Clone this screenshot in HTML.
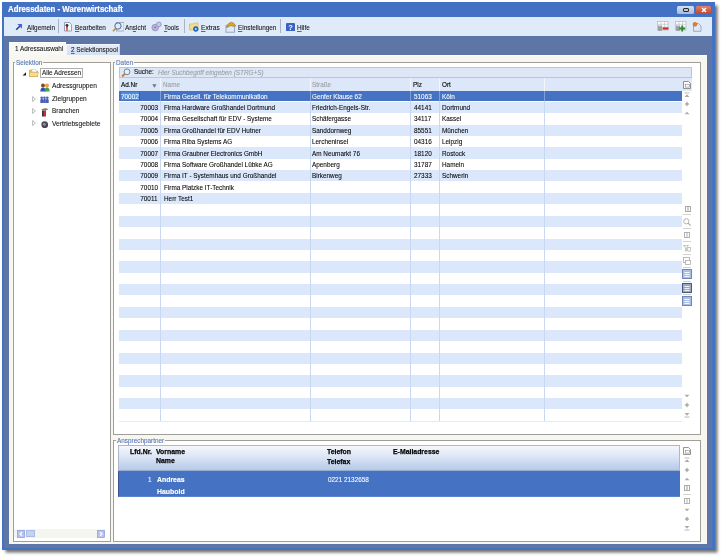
<!DOCTYPE html><html><head><meta charset="utf-8"><style>
*{margin:0;padding:0;box-sizing:border-box}
html,body{width:724px;height:559px;overflow:hidden;background:#fff;position:relative;font-family:"Liberation Sans",sans-serif;font-size:6.4px;color:#000}
div,span{position:absolute}
u{text-decoration-thickness:0.5px;text-underline-offset:0.5px;text-decoration-color:#666}
.t{white-space:nowrap;line-height:1;-webkit-text-stroke:0.08px currentColor}
svg{position:absolute}
</style></head><body><div style="left:0;top:0;width:724px;height:559px;will-change:transform;filter:blur(0.25px)">
<div style="left:2px;top:2px;width:713px;height:548px;background:#4371c3;box-shadow:2.5px 2.5px 3px rgba(60,60,60,0.75)"></div>
<div style="left:4.4px;top:16.5px;width:707.4px;height:531px;background:#5e76a6"></div>
<span class="t" style="left:8.1px;top:5.04px;font-size:8.81px;transform:scaleX(0.8894);transform-origin:0 0;font-weight:bold;color:#fff;-webkit-text-stroke:0.2px #fff">Adressdaten - Warenwirtschaft</span>
<div style="left:677px;top:5.9px;width:17px;height:8px;background:linear-gradient(#d4e0f6,#a5b9e0);border-radius:1.5px"></div>
<div style="left:682.5px;top:8.3px;width:6px;height:4px;border:1px solid #2a2a2a;border-radius:1px;background:#b8c4dc"></div>
<div style="left:695.7px;top:5.9px;width:15.5px;height:8px;background:linear-gradient(#e4806a,#c0452e);border-radius:1.5px"></div>
<svg style="left:700.5px;top:7.2px" width="6" height="6" viewBox="0 0 6 6"><path d="M1 1 L5 5 M5 1 L1 5" stroke="#fff" stroke-width="1.5"/></svg>
<div style="left:4px;top:16.6px;width:708.2px;height:19.4px;background:#e0ebfa"></div>
<div style="left:58.1px;top:19.3px;width:1px;height:13.5px;background:#a9b3c4"></div>
<div style="left:183.9px;top:19.3px;width:1px;height:13.5px;background:#a9b3c4"></div>
<div style="left:280.0px;top:19.3px;width:1px;height:13.5px;background:#a9b3c4"></div>
<svg style="left:15px;top:23px" width="8" height="8" viewBox="0 0 8 8"><path d="M1.2 6.8 L5.8 2.2" stroke="#2c3f8a" stroke-width="1.6"/><path d="M2.3 1 L7 1 L7 5.7 Z" fill="#4e62d0"/></svg>
<span class="t" style="left:26.7px;top:23.50px;font-size:7.23px;transform:scaleX(0.8850);transform-origin:0 0;color:#111"><u>A</u>llgemein</span>
<svg style="left:63px;top:21px" width="10" height="11" viewBox="0 0 10 11"><path d="M1.5 1.5 H6.5 L8.5 3.5 V10 H1.5 Z" fill="#f4f6fb" stroke="#8a96b8" stroke-width="0.9"/><path d="M3 4.5 L5 4.5 L4.6 10 L3.4 10 Z" fill="#c04a28"/><circle cx="4" cy="4.3" r="1.4" fill="#333"/></svg>
<span class="t" style="left:75.3px;top:23.50px;font-size:7.23px;transform:scaleX(0.8850);transform-origin:0 0;color:#111"><u>B</u>earbeiten</span>
<svg style="left:111.5px;top:21px" width="12.5" height="11" viewBox="0 0 12.5 11"><rect x="4.5" y="1.5" width="7.5" height="8.5" fill="#e8eef8" stroke="#8aa0c8" stroke-width="0.8"/><circle cx="6" cy="5" r="3.2" fill="#d8ecfa" stroke="#5a6a88" stroke-width="1"/><path d="M3.8 7.2 L1 10.3" stroke="#c88a30" stroke-width="1.6"/></svg>
<span class="t" style="left:125px;top:23.50px;font-size:7.23px;transform:scaleX(0.8850);transform-origin:0 0;color:#111">An<u>s</u>icht</span>
<svg style="left:151px;top:21px" width="11" height="11" viewBox="0 0 11 11"><circle cx="4.2" cy="6.6" r="3.3" fill="#bdb8dc" stroke="#9088bc" stroke-width="0.8"/><circle cx="7.8" cy="3.4" r="2.4" fill="#ccc7e6" stroke="#9088bc" stroke-width="0.8"/><circle cx="4.2" cy="6.6" r="1" fill="#7d76a8"/></svg>
<span class="t" style="left:163.7px;top:23.50px;font-size:7.23px;transform:scaleX(0.8850);transform-origin:0 0;color:#111"><u>T</u>ools</span>
<svg style="left:188.5px;top:21px" width="10.5" height="11" viewBox="0 0 10.5 11"><path d="M0.5 3 H4 L5 2 H9 V9 H0.5 Z" fill="#f1dd8a" stroke="#d8b850" stroke-width="0.7"/><circle cx="6.8" cy="8" r="2.4" fill="#2a6fd8" stroke="#1b4a9a" stroke-width="0.6"/><circle cx="6.8" cy="8" r="0.9" fill="#bfe0ff"/></svg>
<span class="t" style="left:200.6px;top:23.50px;font-size:7.23px;transform:scaleX(0.9204);transform-origin:0 0;color:#111"><u>E</u>xtras</span>
<svg style="left:224.5px;top:20.5px" width="12" height="12" viewBox="0 0 12 12"><rect x="1" y="4.3" width="8.6" height="6.9" fill="#dfe8f6" stroke="#8da0c4" stroke-width="0.9"/><path d="M1.5 6.3 Q3 1.5 6.5 1.2 Q9 1.5 10.8 5 L7.5 5.2 L5.5 4.6 L3 6.2 Z" fill="#d9a824" stroke="#806018" stroke-width="0.5"/></svg>
<span class="t" style="left:237.6px;top:23.50px;font-size:7.23px;transform:scaleX(0.8850);transform-origin:0 0;color:#111"><u>E</u>instellungen</span>
<svg style="left:285.8px;top:22.8px" width="9" height="8.3" viewBox="0 0 9 8.3"><rect x="0" y="0" width="9" height="8.3" rx="1" fill="#3b62c0"/><text x="4.5" y="7" font-family="Liberation Sans" font-weight="bold" font-size="7.5" fill="#fff" text-anchor="middle">?</text></svg>
<span class="t" style="left:297px;top:23.50px;font-size:7.23px;transform:scaleX(0.8850);transform-origin:0 0;color:#111"><u>H</u>ilfe</span>
<svg style="left:657px;top:21px" width="12" height="11" viewBox="0 0 12 11"><rect x="0.5" y="0.5" width="10.5" height="8.5" fill="#fbfcfb" stroke="#b4b8b6" stroke-width="0.7"/><path d="M0.5 3.3 H11 M0.5 6.1 H11 M4 0.5 V9 M7.5 0.5 V9" stroke="#b8bcba" stroke-width="0.6"/><path d="M1 4.6 H5 V9.4 Q3 10.4 1 9.4 Z" fill="#9a9fa2"/><ellipse cx="3" cy="4.6" rx="2" ry="0.8" fill="#d0d4d8"/><rect x="5.5" y="6.4" width="6" height="2.2" fill="#cc2a2a"/></svg>
<svg style="left:674.5px;top:21px" width="12" height="11" viewBox="0 0 12 11"><rect x="0.5" y="0.5" width="10.5" height="8.5" fill="#fbfcfb" stroke="#b4b8b6" stroke-width="0.7"/><path d="M0.5 3.3 H11 M0.5 6.1 H11 M4 0.5 V9 M7.5 0.5 V9" stroke="#b8bcba" stroke-width="0.6"/><path d="M1 4.6 H5 V9.4 Q3 10.4 1 9.4 Z" fill="#9a9fa2"/><ellipse cx="3" cy="4.6" rx="2" ry="0.8" fill="#d0d4d8"/><path d="M7.2 4.5 V10.5 M4.2 7.5 H10.2" stroke="#2c8a30" stroke-width="1.8"/></svg>
<svg style="left:691.5px;top:20.5px" width="10" height="11" viewBox="0 0 10 11"><path d="M1.5 2.5 H6.5 L9 5 V10.3 H1.5 Z" fill="#dde7f6" stroke="#8090b8" stroke-width="0.7"/><circle cx="3" cy="3.3" r="2" fill="#ee7a2a" stroke="#b85018" stroke-width="0.4"/></svg>
<div style="left:9px;top:54.5px;width:698px;height:489.5px;background:#f7f6f0"></div>
<div style="left:121px;top:54.5px;width:586px;height:1px;background:#fdfdfb"></div>
<div style="left:9px;top:42px;width:57px;height:13px;background:#f8f8f4;border-top:1px solid #fff"></div>
<span class="t" style="left:15px;top:45.40px;font-size:7.23px;transform:scaleX(0.8850);transform-origin:0 0;color:#111">1 Adressauswahl</span>
<div style="left:66.3px;top:43.6px;width:54px;height:11.2px;background:linear-gradient(#e4ecfa,#d3dff4);border:1px solid #f2f6fd;border-bottom:none;border-right-color:#c8d4ec"></div>
<span class="t" style="left:70.6px;top:45.60px;font-size:7.23px;transform:scaleX(0.8850);transform-origin:0 0;color:#111"><u>2</u> Selektionspool</span>
<div style="left:13px;top:62.3px;width:98.4px;height:479.59999999999997px;background:#fff;border:1px solid #9f9e99"></div>
<div style="left:14.7px;top:59.3px;width:28px;height:6px;background:#f7f6f0"></div>
<span class="t" style="left:15.7px;top:58.80px;font-size:7.23px;transform:scaleX(0.8850);transform-origin:0 0;color:#4d70b8;-webkit-text-stroke:0.05px #4d70b8">Selektion</span>
<div style="left:113.3px;top:62.4px;width:587.7px;height:372.5px;background:#fff;border:1px solid #9f9e99"></div>
<div style="left:115.1px;top:59.4px;width:19px;height:6px;background:#f7f6f0"></div>
<span class="t" style="left:116.1px;top:58.90px;font-size:7.23px;transform:scaleX(0.8850);transform-origin:0 0;color:#4d70b8;-webkit-text-stroke:0.05px #4d70b8">Daten</span>
<div style="left:113.4px;top:440.4px;width:587.6px;height:101.5px;background:#fff;border:1px solid #9f9e99"></div>
<div style="left:115.6px;top:437.4px;width:49.5px;height:6px;background:#f7f6f0"></div>
<span class="t" style="left:116.6px;top:436.90px;font-size:7.23px;transform:scaleX(0.8850);transform-origin:0 0;color:#4d70b8;-webkit-text-stroke:0.05px #4d70b8">Ansprechpartner</span>
<svg style="left:21.5px;top:71.5px" width="5" height="4" viewBox="0 0 5 4"><path d="M0.5 3.5 L4 0.2 L4 3.5 Z" fill="#1e1e1e"/></svg>
<svg style="left:28.5px;top:69px" width="10" height="8" viewBox="0 0 10 8"><path d="M0.5 1 H3.5 L4.5 2 H8.5 V7.5 H0.5 Z" fill="#e8c86a" stroke="#c0984a" stroke-width="0.6"/><path d="M3 0.5 L7 0.5 L8 3 L3 3 Z" fill="#ffffff" stroke="#b0b8c0" stroke-width="0.4"/><path d="M0.5 3.3 H9.5 L8.5 7.5 H0.5 Z" fill="#f6dd8a" stroke="#c8a050" stroke-width="0.5"/></svg>
<div style="left:40.2px;top:68.4px;width:43px;height:9.2px;border:1px solid #b0b0b0;background:#fff"></div>
<span class="t" style="left:41.8px;top:69.10px;font-size:7.23px;transform:scaleX(0.8850);transform-origin:0 0;color:#111">Alle Adressen</span>
<svg style="left:39.5px;top:82.5px" width="10" height="9" viewBox="0 0 10 9"><circle cx="3" cy="2.6" r="2" fill="#8a4a20"/><path d="M0.3 8.5 Q0.5 4.5 3 4.5 Q5.5 4.5 5.7 8.5 Z" fill="#3050b8"/><circle cx="7" cy="2.6" r="2" fill="#e8a040"/><path d="M4.3 8.5 Q4.5 4.5 7 4.5 Q9.5 4.5 9.7 8.5 Z" fill="#40a050"/></svg>
<span class="t" style="left:52.2px;top:82.40px;font-size:7.23px;transform:scaleX(0.9159);transform-origin:0 0;color:#111">Adressgruppen</span>
<svg style="left:31.5px;top:95.7px" width="4" height="6" viewBox="0 0 4 6"><path d="M0.6 0.6 L3.4 3 L0.6 5.4 Z" fill="#fff" stroke="#8a8a8a" stroke-width="0.6"/></svg>
<svg style="left:31.5px;top:108.0px" width="4" height="6" viewBox="0 0 4 6"><path d="M0.6 0.6 L3.4 3 L0.6 5.4 Z" fill="#fff" stroke="#8a8a8a" stroke-width="0.6"/></svg>
<svg style="left:31.5px;top:120.3px" width="4" height="6" viewBox="0 0 4 6"><path d="M0.6 0.6 L3.4 3 L0.6 5.4 Z" fill="#fff" stroke="#8a8a8a" stroke-width="0.6"/></svg>
<svg style="left:39.8px;top:95.8px" width="9" height="7.5" viewBox="0 0 9 7.5"><g fill="#4a60b8"><circle cx="1.7" cy="1.8" r="1.3"/><rect x="0.3" y="3" width="2.8" height="4.3" rx="1"/><circle cx="4.5" cy="1.8" r="1.3"/><rect x="3.1" y="3" width="2.8" height="4.3" rx="1"/><circle cx="7.3" cy="1.8" r="1.3"/><rect x="5.9" y="3" width="2.8" height="4.3" rx="1"/></g></svg>
<span class="t" style="left:52.2px;top:94.50px;font-size:7.23px;transform:scaleX(0.9115);transform-origin:0 0;color:#111">Zielgruppen</span>
<svg style="left:40px;top:106.5px" width="9" height="10" viewBox="0 0 9 10"><path d="M1 3 Q4 0 8.5 2 L6 3.5 Z" fill="#7a7a70"/><rect x="3" y="3.5" width="3" height="6" fill="#c03030"/><rect x="2" y="3.5" width="1.5" height="6" fill="#333"/></svg>
<span class="t" style="left:52.2px;top:107.20px;font-size:7.23px;transform:scaleX(0.8850);transform-origin:0 0;color:#111">Branchen</span>
<svg style="left:40.8px;top:120.5px" width="7.5" height="7.5" viewBox="0 0 7.5 7.5"><circle cx="3.75" cy="3.75" r="3.4" fill="#4a4650"/><circle cx="3.3" cy="3.3" r="1.4" fill="#9a90a0"/></svg>
<span class="t" style="left:52.2px;top:119.50px;font-size:7.23px;transform:scaleX(0.9292);transform-origin:0 0;color:#111">Vertriebsgebiete</span>
<div style="left:14px;top:529.3px;width:90.5px;height:8.8px;background:#f5f5f0"></div>
<svg style="left:17px;top:530.1px" width="8" height="8" viewBox="0 0 8 8"><rect x="0.4" y="0.4" width="7.2" height="7.2" fill="#b4c2ec" stroke="#8c9cdc" stroke-width="0.7"/><path d="M5 2 L3 4 L5 6" stroke="#fff" stroke-width="1.2" fill="none"/></svg>
<div style="left:25.8px;top:530.4px;width:9px;height:7px;background:#c4d2f0;border:0.6px solid #a8bce6"></div>
<svg style="left:96.8px;top:530.1px" width="8" height="8" viewBox="0 0 8 8"><rect x="0.4" y="0.4" width="7.2" height="7.2" fill="#b4c2ec" stroke="#8c9cdc" stroke-width="0.7"/><path d="M3 2 L5 4 L3 6" stroke="#fff" stroke-width="1.2" fill="none"/></svg>
<div style="left:119px;top:66.8px;width:572.5px;height:11px;background:#dde7f5;border:1px solid #b6c6e0"></div>
<svg style="left:120.5px;top:67.8px" width="10" height="9" viewBox="0 0 10 9"><circle cx="6" cy="3.8" r="2.9" fill="#dff0fb" stroke="#6a7a90" stroke-width="0.9"/><path d="M3.8 6 L1 8.5" stroke="#c8782a" stroke-width="1.8"/></svg>
<span class="t" style="left:133.8px;top:68.40px;font-size:7.23px;transform:scaleX(0.8850);transform-origin:0 0;color:#111;-webkit-text-stroke:0.12px #111">Suche:</span>
<span class="t" style="left:158px;top:68.60px;font-size:7.23px;transform:scaleX(0.8850);transform-origin:0 0;font-style:italic;color:#9aa0a8;-webkit-text-stroke:0.1px #9aa0a8">Hier Suchbegriff eingeben (STRG+S)</span>
<div style="left:119.0px;top:77.8px;width:573.0px;height:12.9px;background:#dce8f9"></div>
<span class="t" style="left:120.9px;top:80.80px;font-size:7.23px;transform:scaleX(0.8850);transform-origin:0 0;color:#000;-webkit-text-stroke:0.15px #000">Ad.Nr</span>
<svg style="left:152px;top:83.6px" width="5" height="4" viewBox="0 0 5 4"><path d="M0.2 0.2 L4.6 0.2 L2.4 3.8 Z" fill="#777"/></svg>
<span class="t" style="left:163px;top:80.80px;font-size:7.23px;transform:scaleX(0.8850);transform-origin:0 0;color:#9a9a9a">Name</span>
<span class="t" style="left:312.3px;top:80.80px;font-size:7.23px;transform:scaleX(0.8850);transform-origin:0 0;color:#9a9a9a">Straße</span>
<span class="t" style="left:413px;top:80.80px;font-size:7.23px;transform:scaleX(0.8850);transform-origin:0 0;color:#111;-webkit-text-stroke:0.15px #000">Plz</span>
<span class="t" style="left:441.7px;top:80.80px;font-size:7.23px;transform:scaleX(0.8850);transform-origin:0 0;color:#111;-webkit-text-stroke:0.15px #000">Ort</span>
<div style="left:119.0px;top:90.7px;width:563.0px;height:10.5px;background:#4672c4"></div>
<div style="left:119.0px;top:101.7px;width:563.0px;height:11.4px;background:#dbe8fb"></div>
<div style="left:119.0px;top:113.1px;width:563.0px;height:11.4px;background:#ffffff"></div>
<div style="left:119.0px;top:124.5px;width:563.0px;height:11.4px;background:#dbe8fb"></div>
<div style="left:119.0px;top:135.9px;width:563.0px;height:11.4px;background:#ffffff"></div>
<div style="left:119.0px;top:147.3px;width:563.0px;height:11.4px;background:#dbe8fb"></div>
<div style="left:119.0px;top:158.7px;width:563.0px;height:11.4px;background:#ffffff"></div>
<div style="left:119.0px;top:170.1px;width:563.0px;height:11.4px;background:#dbe8fb"></div>
<div style="left:119.0px;top:181.5px;width:563.0px;height:11.4px;background:#ffffff"></div>
<div style="left:119.0px;top:192.9px;width:563.0px;height:11.4px;background:#dbe8fb"></div>
<div style="left:119.0px;top:204.3px;width:563.0px;height:11.4px;background:#ffffff"></div>
<div style="left:119.0px;top:215.7px;width:563.0px;height:11.4px;background:#dbe8fb"></div>
<div style="left:119.0px;top:227.1px;width:563.0px;height:11.4px;background:#ffffff"></div>
<div style="left:119.0px;top:238.5px;width:563.0px;height:11.4px;background:#dbe8fb"></div>
<div style="left:119.0px;top:249.9px;width:563.0px;height:11.4px;background:#ffffff"></div>
<div style="left:119.0px;top:261.3px;width:563.0px;height:11.4px;background:#dbe8fb"></div>
<div style="left:119.0px;top:272.7px;width:563.0px;height:11.4px;background:#ffffff"></div>
<div style="left:119.0px;top:284.1px;width:563.0px;height:11.4px;background:#dbe8fb"></div>
<div style="left:119.0px;top:295.5px;width:563.0px;height:11.4px;background:#ffffff"></div>
<div style="left:119.0px;top:306.9px;width:563.0px;height:11.4px;background:#dbe8fb"></div>
<div style="left:119.0px;top:318.3px;width:563.0px;height:11.4px;background:#ffffff"></div>
<div style="left:119.0px;top:329.7px;width:563.0px;height:11.4px;background:#dbe8fb"></div>
<div style="left:119.0px;top:341.1px;width:563.0px;height:11.4px;background:#ffffff"></div>
<div style="left:119.0px;top:352.5px;width:563.0px;height:11.4px;background:#dbe8fb"></div>
<div style="left:119.0px;top:363.9px;width:563.0px;height:11.4px;background:#ffffff"></div>
<div style="left:119.0px;top:375.3px;width:563.0px;height:11.4px;background:#dbe8fb"></div>
<div style="left:119.0px;top:386.7px;width:563.0px;height:11.4px;background:#ffffff"></div>
<div style="left:119.0px;top:398.1px;width:563.0px;height:11.4px;background:#dbe8fb"></div>
<div style="left:119.0px;top:409.5px;width:563.0px;height:11.4px;background:#ffffff"></div>
<div style="left:119.0px;top:420.9px;width:563.0px;height:0.8px;background:#e2eaf6"></div>
<div style="left:120.6px;top:91.8px;width:18.3px;height:8.6px;background:#4b8ce2"></div>
<div style="left:138.9px;top:91.8px;width:0.6px;height:8.6px;background:#6e5068"></div>
<div style="left:159.9px;top:90.7px;width:0.8px;height:330.3px;background:#c8d8f0"></div>
<div style="left:159.9px;top:77.8px;width:0.8px;height:12.9px;background:#f2f6fc"></div>
<div style="left:159.9px;top:90.7px;width:0.8px;height:10.5px;background:#7e9ddb"></div>
<div style="left:309.6px;top:90.7px;width:0.8px;height:330.3px;background:#c8d8f0"></div>
<div style="left:309.6px;top:77.8px;width:0.8px;height:12.9px;background:#f2f6fc"></div>
<div style="left:309.6px;top:90.7px;width:0.8px;height:10.5px;background:#7e9ddb"></div>
<div style="left:410.2px;top:90.7px;width:0.8px;height:330.3px;background:#c8d8f0"></div>
<div style="left:410.2px;top:77.8px;width:0.8px;height:12.9px;background:#f2f6fc"></div>
<div style="left:410.2px;top:90.7px;width:0.8px;height:10.5px;background:#7e9ddb"></div>
<div style="left:438.6px;top:90.7px;width:0.8px;height:330.3px;background:#c8d8f0"></div>
<div style="left:438.6px;top:77.8px;width:0.8px;height:12.9px;background:#f2f6fc"></div>
<div style="left:438.6px;top:90.7px;width:0.8px;height:10.5px;background:#7e9ddb"></div>
<div style="left:544.1px;top:90.7px;width:0.8px;height:330.3px;background:#c8d8f0"></div>
<div style="left:544.1px;top:77.8px;width:0.8px;height:12.9px;background:#f2f6fc"></div>
<div style="left:544.1px;top:90.7px;width:0.8px;height:10.5px;background:#7e9ddb"></div>
<span class="t" style="left:120.5px;top:92.50px;font-size:7.23px;transform:scaleX(0.8850);transform-origin:0 0;color:#fff">70002</span>
<span class="t" style="left:163.6px;top:92.50px;font-size:7.23px;transform:scaleX(0.8850);transform-origin:0 0;color:#fff">Firma Gesell. für Telekommunikation</span>
<span class="t" style="left:312.3px;top:92.50px;font-size:7.23px;transform:scaleX(0.8850);transform-origin:0 0;color:#fff">Genfer Klause 62</span>
<span class="t" style="left:414.2px;top:92.50px;font-size:7.23px;transform:scaleX(0.8850);transform-origin:0 0;color:#fff">51063</span>
<span class="t" style="left:441.7px;top:92.50px;font-size:7.23px;transform:scaleX(0.8850);transform-origin:0 0;color:#fff">Köln</span>
<span class="t" style="right:566px;top:103.90px;font-size:7.23px;transform:scaleX(0.8850);transform-origin:100% 0;color:#000">70003</span>
<span class="t" style="left:163.6px;top:103.90px;font-size:7.23px;transform:scaleX(0.8850);transform-origin:0 0;color:#000">Firma Hardware Großhandel Dortmund</span>
<span class="t" style="left:312.3px;top:103.90px;font-size:7.23px;transform:scaleX(0.8850);transform-origin:0 0;color:#000">Friedrich-Engels-Str.</span>
<span class="t" style="left:414.2px;top:103.90px;font-size:7.23px;transform:scaleX(0.8850);transform-origin:0 0;color:#000">44141</span>
<span class="t" style="left:441.7px;top:103.90px;font-size:7.23px;transform:scaleX(0.8850);transform-origin:0 0;color:#000">Dortmund</span>
<span class="t" style="right:566px;top:115.30px;font-size:7.23px;transform:scaleX(0.8850);transform-origin:100% 0;color:#000">70004</span>
<span class="t" style="left:163.6px;top:115.30px;font-size:7.23px;transform:scaleX(0.8850);transform-origin:0 0;color:#000">Firma Gesellschaft für EDV - Systeme</span>
<span class="t" style="left:312.3px;top:115.30px;font-size:7.23px;transform:scaleX(0.8850);transform-origin:0 0;color:#000">Schäfergasse</span>
<span class="t" style="left:414.2px;top:115.30px;font-size:7.23px;transform:scaleX(0.8850);transform-origin:0 0;color:#000">34117</span>
<span class="t" style="left:441.7px;top:115.30px;font-size:7.23px;transform:scaleX(0.8850);transform-origin:0 0;color:#000">Kassel</span>
<span class="t" style="right:566px;top:126.70px;font-size:7.23px;transform:scaleX(0.8850);transform-origin:100% 0;color:#000">70005</span>
<span class="t" style="left:163.6px;top:126.70px;font-size:7.23px;transform:scaleX(0.8850);transform-origin:0 0;color:#000">Firma Großhandel für EDV Hutner</span>
<span class="t" style="left:312.3px;top:126.70px;font-size:7.23px;transform:scaleX(0.8850);transform-origin:0 0;color:#000">Sanddornweg</span>
<span class="t" style="left:414.2px;top:126.70px;font-size:7.23px;transform:scaleX(0.8850);transform-origin:0 0;color:#000">85551</span>
<span class="t" style="left:441.7px;top:126.70px;font-size:7.23px;transform:scaleX(0.8850);transform-origin:0 0;color:#000">München</span>
<span class="t" style="right:566px;top:138.10px;font-size:7.23px;transform:scaleX(0.8850);transform-origin:100% 0;color:#000">70006</span>
<span class="t" style="left:163.6px;top:138.10px;font-size:7.23px;transform:scaleX(0.8850);transform-origin:0 0;color:#000">Firma Riba Systems AG</span>
<span class="t" style="left:312.3px;top:138.10px;font-size:7.23px;transform:scaleX(0.8850);transform-origin:0 0;color:#000">Lercheninsel</span>
<span class="t" style="left:414.2px;top:138.10px;font-size:7.23px;transform:scaleX(0.8850);transform-origin:0 0;color:#000">04316</span>
<span class="t" style="left:441.7px;top:138.10px;font-size:7.23px;transform:scaleX(0.8850);transform-origin:0 0;color:#000">Leipzig</span>
<span class="t" style="right:566px;top:149.50px;font-size:7.23px;transform:scaleX(0.8850);transform-origin:100% 0;color:#000">70007</span>
<span class="t" style="left:163.6px;top:149.50px;font-size:7.23px;transform:scaleX(0.8850);transform-origin:0 0;color:#000">Firma Graubner Electronics GmbH</span>
<span class="t" style="left:312.3px;top:149.50px;font-size:7.23px;transform:scaleX(0.8850);transform-origin:0 0;color:#000">Am Neumarkt 76</span>
<span class="t" style="left:414.2px;top:149.50px;font-size:7.23px;transform:scaleX(0.8850);transform-origin:0 0;color:#000">18120</span>
<span class="t" style="left:441.7px;top:149.50px;font-size:7.23px;transform:scaleX(0.8850);transform-origin:0 0;color:#000">Rostock</span>
<span class="t" style="right:566px;top:160.90px;font-size:7.23px;transform:scaleX(0.8850);transform-origin:100% 0;color:#000">70008</span>
<span class="t" style="left:163.6px;top:160.90px;font-size:7.23px;transform:scaleX(0.8850);transform-origin:0 0;color:#000">Firma Software Großhandel Lübke AG</span>
<span class="t" style="left:312.3px;top:160.90px;font-size:7.23px;transform:scaleX(0.8850);transform-origin:0 0;color:#000">Apenberg</span>
<span class="t" style="left:414.2px;top:160.90px;font-size:7.23px;transform:scaleX(0.8850);transform-origin:0 0;color:#000">31787</span>
<span class="t" style="left:441.7px;top:160.90px;font-size:7.23px;transform:scaleX(0.8850);transform-origin:0 0;color:#000">Hameln</span>
<span class="t" style="right:566px;top:172.30px;font-size:7.23px;transform:scaleX(0.8850);transform-origin:100% 0;color:#000">70009</span>
<span class="t" style="left:163.6px;top:172.30px;font-size:7.23px;transform:scaleX(0.8850);transform-origin:0 0;color:#000">Firma IT - Systemhaus und Großhandel</span>
<span class="t" style="left:312.3px;top:172.30px;font-size:7.23px;transform:scaleX(0.8850);transform-origin:0 0;color:#000">Birkenweg</span>
<span class="t" style="left:414.2px;top:172.30px;font-size:7.23px;transform:scaleX(0.8850);transform-origin:0 0;color:#000">27333</span>
<span class="t" style="left:441.7px;top:172.30px;font-size:7.23px;transform:scaleX(0.8850);transform-origin:0 0;color:#000">Schwerin</span>
<span class="t" style="right:566px;top:183.70px;font-size:7.23px;transform:scaleX(0.8850);transform-origin:100% 0;color:#000">70010</span>
<span class="t" style="left:163.6px;top:183.70px;font-size:7.23px;transform:scaleX(0.8850);transform-origin:0 0;color:#000">Firma Platzke IT-Technik</span>
<span class="t" style="left:312.3px;top:183.70px;font-size:7.23px;transform:scaleX(0.8850);transform-origin:0 0;color:#000"></span>
<span class="t" style="left:414.2px;top:183.70px;font-size:7.23px;transform:scaleX(0.8850);transform-origin:0 0;color:#000"></span>
<span class="t" style="left:441.7px;top:183.70px;font-size:7.23px;transform:scaleX(0.8850);transform-origin:0 0;color:#000"></span>
<span class="t" style="right:566px;top:195.10px;font-size:7.23px;transform:scaleX(0.8850);transform-origin:100% 0;color:#000">70011</span>
<span class="t" style="left:163.6px;top:195.10px;font-size:7.23px;transform:scaleX(0.8850);transform-origin:0 0;color:#000">Herr Test1</span>
<span class="t" style="left:312.3px;top:195.10px;font-size:7.23px;transform:scaleX(0.8850);transform-origin:0 0;color:#000"></span>
<span class="t" style="left:414.2px;top:195.10px;font-size:7.23px;transform:scaleX(0.8850);transform-origin:0 0;color:#000"></span>
<span class="t" style="left:441.7px;top:195.10px;font-size:7.23px;transform:scaleX(0.8850);transform-origin:0 0;color:#000"></span>
<svg style="left:682px;top:80px" width="10" height="10" viewBox="0 0 10 10"><path d="M1.5 1.5 H6.5 L8.5 3.5 V8.5 H1.5 Z" fill="#fafafa" stroke="#7a7a7a" stroke-width="0.8"/><rect x="3.5" y="4.5" width="4" height="2.6" fill="#fff" stroke="#8a8a8a" stroke-width="0.6"/></svg>
<svg style="left:682px;top:90px" width="10" height="10" viewBox="0 0 10 10"><g transform="translate(5 5) scale(0.82) translate(-5 -5)"><path d="M2 2.5 H8" stroke="#ababab" stroke-width="1"/><path d="M2 7.5 L5 4.2 L8 7.5 Z" fill="#ababab"/></g></svg>
<svg style="left:682px;top:99px" width="10" height="10" viewBox="0 0 10 10"><g transform="translate(5 5) scale(0.82) translate(-5 -5)"><path d="M5 2 L6.2 3.8 L8 5 L6.2 6.2 L5 8 L3.8 6.2 L2 5 L3.8 3.8 Z" fill="#ababab"/></g></svg>
<svg style="left:682px;top:108px" width="10" height="10" viewBox="0 0 10 10"><g transform="translate(5 5) scale(0.82) translate(-5 -5)"><path d="M2 6.6 L5 3.4 L8 6.6 Z" fill="#ababab"/></g></svg>
<svg style="left:683px;top:204px" width="10" height="10" viewBox="0 0 10 10"><rect x="2.5" y="2.5" width="5" height="5" fill="none" stroke="#ababab" stroke-width="1"/><path d="M4.5 2.5 V7.5 M5.5 2.5 V7.5" stroke="#ababab" stroke-width="0.6"/></svg>
<div style="left:683.4px;top:214.4px;width:8px;height:0.8px;background:#d2d2d2"></div>
<svg style="left:682px;top:217px" width="10" height="10" viewBox="0 0 10 10"><circle cx="4.3" cy="4.3" r="2.6" fill="none" stroke="#ababab" stroke-width="0.9"/><path d="M6.2 6.2 L8.6 8.6" stroke="#ababab" stroke-width="1.2"/></svg>
<div style="left:683.4px;top:228.0px;width:8px;height:0.8px;background:#d2d2d2"></div>
<svg style="left:682px;top:230px" width="10" height="10" viewBox="0 0 10 10"><path d="M2 2.5 H8 M2.5 2.5 V7 M5 2.5 V7 M7.5 2.5 V7 M2 7.5 H8" stroke="#a0a0a0" stroke-width="0.8"/></svg>
<div style="left:683.4px;top:241.1px;width:8px;height:0.8px;background:#d2d2d2"></div>
<svg style="left:682px;top:243px" width="10" height="10" viewBox="0 0 10 10"><path d="M1.5 2.5 H6.5 L4.6 4.8 V8 L3.4 8 V4.8 Z" fill="none" stroke="#ababab" stroke-width="0.7"/><rect x="5.8" y="4.5" width="2.6" height="3.6" fill="none" stroke="#a0a0a0" stroke-width="0.6"/></svg>
<div style="left:683.4px;top:254.4px;width:8px;height:0.8px;background:#d2d2d2"></div>
<svg style="left:682px;top:256px" width="10" height="10" viewBox="0 0 10 10"><rect x="1.5" y="1.5" width="6" height="5" fill="none" stroke="#ababab" stroke-width="0.8"/><rect x="3.5" y="4.5" width="5" height="4" fill="#fff" stroke="#ababab" stroke-width="0.8"/></svg>
<div style="left:683.4px;top:267.40000000000003px;width:8px;height:0.8px;background:#d2d2d2"></div>
<svg style="left:682px;top:269px" width="10" height="10" viewBox="0 0 10 10"><rect x="0.5" y="0.5" width="9" height="9" fill="#aabde2" stroke="#6f86b8" stroke-width="1"/><path d="M2.5 3.5 H7.5 M2.5 5.5 H7.5 M2.5 7.5 H7.5" stroke="#f4f8ff" stroke-width="1"/></svg>
<div style="left:683.4px;top:280.6px;width:8px;height:0.8px;background:#d2d2d2"></div>
<svg style="left:682px;top:283px" width="10" height="10" viewBox="0 0 10 10"><rect x="0.5" y="0.5" width="9" height="9" fill="#9aa6c4" stroke="#4e5878" stroke-width="1"/><path d="M2.5 3.5 H7.5 M2.5 5.5 H7.5 M2.5 7.5 H7.5" stroke="#eef2fa" stroke-width="1"/></svg>
<div style="left:683.4px;top:294.0px;width:8px;height:0.8px;background:#d2d2d2"></div>
<svg style="left:682px;top:296px" width="10" height="10" viewBox="0 0 10 10"><rect x="0.5" y="0.5" width="9" height="9" fill="#aabde2" stroke="#6f86b8" stroke-width="1"/><path d="M2.5 3.5 H7.5 M2.5 5.5 H7.5 M2.5 7.5 H7.5" stroke="#f4f8ff" stroke-width="1"/></svg>
<svg style="left:682px;top:391px" width="10" height="10" viewBox="0 0 10 10"><g transform="translate(5 5) scale(0.82) translate(-5 -5)"><path d="M2 3.4 L5 6.6 L8 3.4 Z" fill="#ababab"/></g></svg>
<svg style="left:682px;top:400px" width="10" height="10" viewBox="0 0 10 10"><g transform="translate(5 5) scale(0.82) translate(-5 -5)"><path d="M5 2 L6.2 3.8 L8 5 L6.2 6.2 L5 8 L3.8 6.2 L2 5 L3.8 3.8 Z" fill="#ababab"/></g></svg>
<svg style="left:682px;top:410px" width="10" height="10" viewBox="0 0 10 10"><g transform="translate(5 5) scale(0.82) translate(-5 -5)"><path d="M2 7.5 H8" stroke="#ababab" stroke-width="1"/><path d="M2 2.5 L5 5.8 L8 2.5 Z" fill="#ababab"/></g></svg>
<svg style="left:682px;top:446px" width="10" height="10" viewBox="0 0 10 10"><path d="M1.5 1.5 H6.5 L8.5 3.5 V8.5 H1.5 Z" fill="#fafafa" stroke="#7a7a7a" stroke-width="0.8"/><rect x="3.5" y="4.5" width="4" height="2.6" fill="#fff" stroke="#8a8a8a" stroke-width="0.6"/></svg>
<svg style="left:682px;top:455px" width="10" height="10" viewBox="0 0 10 10"><g transform="translate(5 5) scale(0.82) translate(-5 -5)"><path d="M2 2.5 H8" stroke="#ababab" stroke-width="1"/><path d="M2 7.5 L5 4.2 L8 7.5 Z" fill="#ababab"/></g></svg>
<svg style="left:682px;top:465px" width="10" height="10" viewBox="0 0 10 10"><g transform="translate(5 5) scale(0.82) translate(-5 -5)"><path d="M5 2 L6.2 3.8 L8 5 L6.2 6.2 L5 8 L3.8 6.2 L2 5 L3.8 3.8 Z" fill="#ababab"/></g></svg>
<svg style="left:682px;top:474px" width="10" height="10" viewBox="0 0 10 10"><g transform="translate(5 5) scale(0.82) translate(-5 -5)"><path d="M2 6.6 L5 3.4 L8 6.6 Z" fill="#ababab"/></g></svg>
<svg style="left:682px;top:483px" width="10" height="10" viewBox="0 0 10 10"><rect x="2.5" y="2.5" width="5" height="5" fill="none" stroke="#ababab" stroke-width="1"/><path d="M4.5 2.5 V7.5 M5.5 2.5 V7.5" stroke="#ababab" stroke-width="0.6"/></svg>
<div style="left:683.4px;top:493.8px;width:8px;height:0.8px;background:#d2d2d2"></div>
<svg style="left:682px;top:496px" width="10" height="10" viewBox="0 0 10 10"><path d="M2 2.5 H8 M2.5 2.5 V7 M5 2.5 V7 M7.5 2.5 V7 M2 7.5 H8" stroke="#a0a0a0" stroke-width="0.8"/></svg>
<svg style="left:682px;top:505px" width="10" height="10" viewBox="0 0 10 10"><g transform="translate(5 5) scale(0.82) translate(-5 -5)"><path d="M2 3.4 L5 6.6 L8 3.4 Z" fill="#ababab"/></g></svg>
<svg style="left:682px;top:514px" width="10" height="10" viewBox="0 0 10 10"><g transform="translate(5 5) scale(0.82) translate(-5 -5)"><path d="M5 2 L6.2 3.8 L8 5 L6.2 6.2 L5 8 L3.8 6.2 L2 5 L3.8 3.8 Z" fill="#ababab"/></g></svg>
<svg style="left:682px;top:523px" width="10" height="10" viewBox="0 0 10 10"><g transform="translate(5 5) scale(0.82) translate(-5 -5)"><path d="M2 7.5 H8" stroke="#ababab" stroke-width="1"/><path d="M2 2.5 L5 5.8 L8 2.5 Z" fill="#ababab"/></g></svg>
<div style="left:118.3px;top:445px;width:562.2px;height:25.8px;background:linear-gradient(#f5f7fc,#e2eaf7 35%,#b6cae9);border:1px solid #b2b6ca;border-bottom:1px solid #98acd0"></div>
<div style="left:118.3px;top:470.8px;width:562.2px;height:26.5px;background:#4672c4;border-bottom:1px solid #5c84cc;border-left:1px solid #3e5290"></div>
<span class="t" style="left:130.2px;top:448.04px;font-size:7.80px;transform:scaleX(0.8850);transform-origin:0 0;font-weight:bold;color:#000;-webkit-text-stroke:0.25px #000">Lfd.Nr.</span>
<span class="t" style="left:156.1px;top:448.04px;font-size:7.80px;transform:scaleX(0.8850);transform-origin:0 0;font-weight:bold;color:#000;-webkit-text-stroke:0.25px #000">Vorname</span>
<span class="t" style="left:156.1px;top:457.04px;font-size:7.80px;transform:scaleX(0.8850);transform-origin:0 0;font-weight:bold;color:#000;-webkit-text-stroke:0.25px #000">Name</span>
<span class="t" style="left:326.9px;top:448.04px;font-size:7.80px;transform:scaleX(0.8850);transform-origin:0 0;font-weight:bold;color:#000;-webkit-text-stroke:0.25px #000">Telefon</span>
<span class="t" style="left:326.9px;top:457.84px;font-size:7.80px;transform:scaleX(0.8850);transform-origin:0 0;font-weight:bold;color:#000;-webkit-text-stroke:0.25px #000">Telefax</span>
<span class="t" style="left:392.6px;top:448.04px;font-size:7.80px;transform:scaleX(0.8850);transform-origin:0 0;font-weight:bold;color:#000;-webkit-text-stroke:0.25px #000">E-Mailadresse</span>
<span class="t" style="left:147.5px;top:476.10px;font-size:7.23px;transform:scaleX(0.8850);transform-origin:0 0;color:#fff">1</span>
<span class="t" style="left:157px;top:475.54px;font-size:7.80px;transform:scaleX(0.8850);transform-origin:0 0;font-weight:bold;color:#fff;-webkit-text-stroke:0.15px #fff">Andreas</span>
<span class="t" style="left:157px;top:488.44px;font-size:7.80px;transform:scaleX(0.8850);transform-origin:0 0;font-weight:bold;color:#fff;-webkit-text-stroke:0.15px #fff">Haubold</span>
<span class="t" style="left:327.6px;top:475.50px;font-size:7.23px;transform:scaleX(0.8850);transform-origin:0 0;color:#fff">0221 2132658</span>
</div></body></html>
